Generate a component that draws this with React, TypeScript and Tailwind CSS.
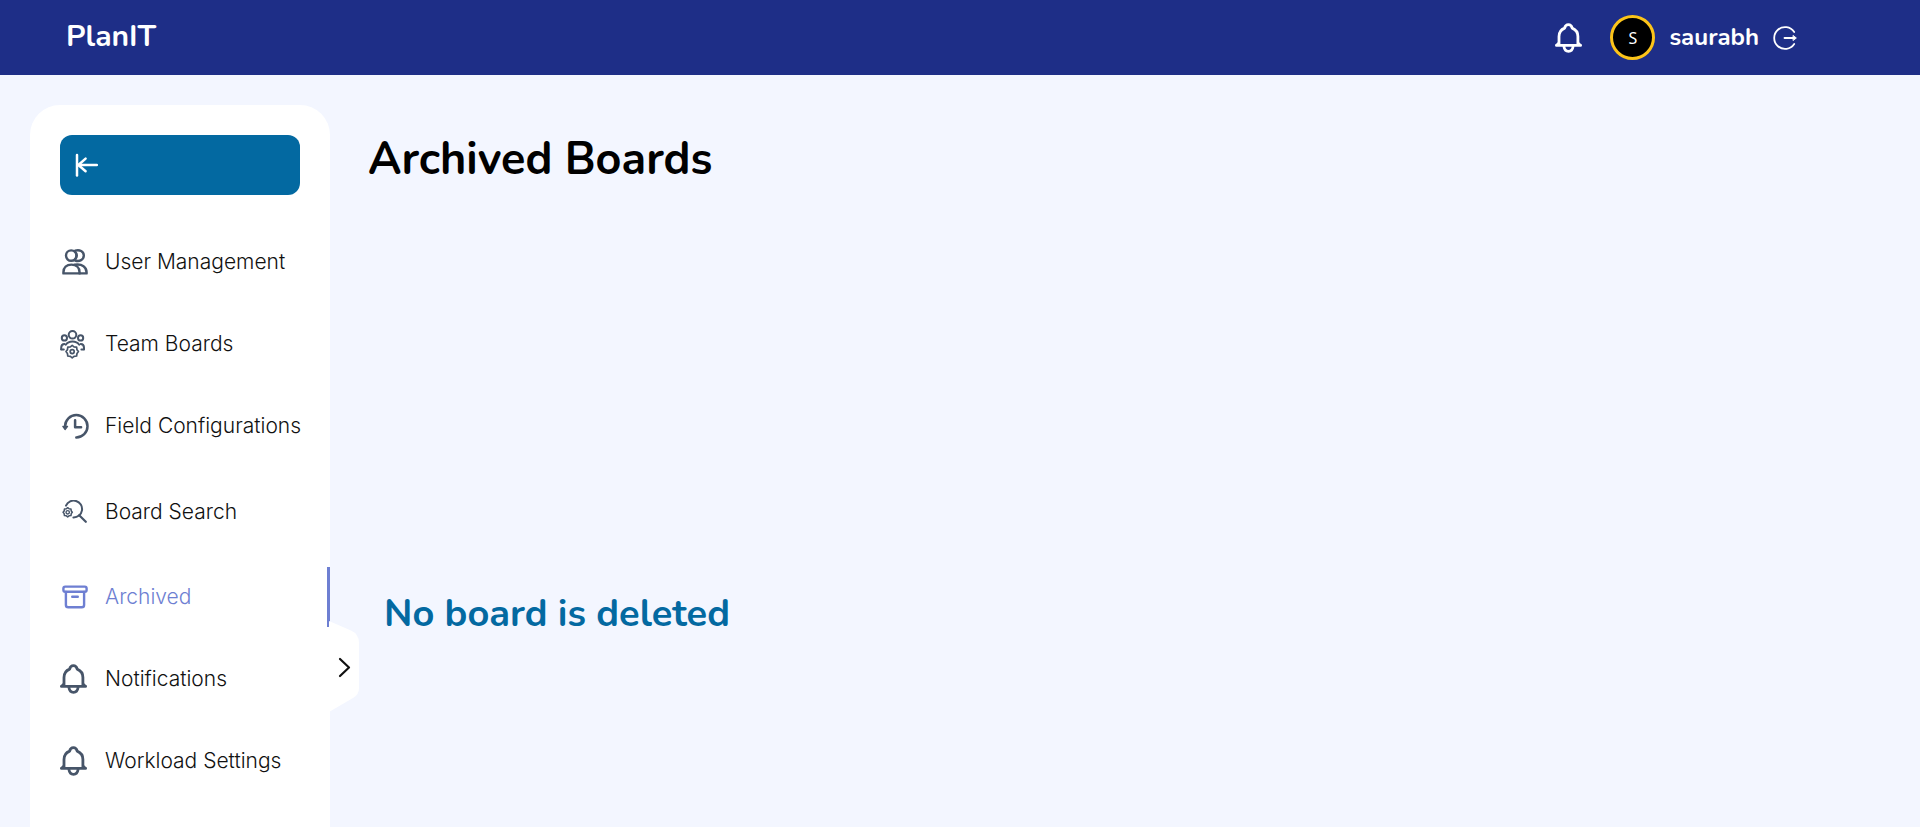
import { useState, type ReactNode } from "react";

const stroke = {
  fill: "none",
  stroke: "currentColor",
  strokeLinecap: "round" as const,
  strokeLinejoin: "round" as const,
};

function BellIcon() {
  return (
    <svg width="27" height="30" viewBox="0 0 27 30" aria-hidden="true" {...stroke} strokeWidth="2.8">
      <path d="M1.4 22.4h24.2" />
      <path d="M4 21.5V13.4C4 9.6 6 6.6 9.6 5.1C10.2 2.6 11.6 1.6 13.4 1.6S16.6 2.6 17.2 5.1C20.8 6.6 22.9 9.6 22.9 13.4v8.1" />
      <path d="M1.6 21.6L3.9 19.4M25.4 21.6L23 19.4" strokeWidth="1.8" />
      <path d="M8.9 23.4c.5 3.4 2.2 5 4.6 5s4.1-1.6 4.6-5" />
    </svg>
  );
}

function UsersIcon() {
  return (
    <svg width="26" height="26" viewBox="0 0 26 26" aria-hidden="true" {...stroke} strokeWidth="2.4">
      <circle cx="9.2" cy="6.6" r="5.2" />
      <path d="M13.2 1.7C17.5.2 21.8 2.5 21.8 6.6S17.5 13 13.2 11.5" />
      <path d="M12.6 2.4c2.9 2.4 2.9 6 0 8.4" />
      <path d="M1.4 24.4v-1C1.4 18.5 4.7 15.6 9.4 15.6s8.2 2.9 8.2 7.8v1z" />
      <path d="M12.6 15.8c7.8-1.2 12 2.3 12 7.6v1h-7" />
    </svg>
  );
}

const gearPath =
  "M0-6.2L1.8-4.8L4.4-4.4L4.8-1.8L6.2 0L4.8 1.8L4.4 4.4L1.8 4.8L0 6.2L-1.8 4.8L-4.4 4.4L-4.8 1.8L-6.2 0L-4.8-1.8L-4.4-4.4L-1.8-4.8Z";

function TeamIcon() {
  return (
    <svg width="26" height="29" viewBox="0 0 26 29" aria-hidden="true" {...stroke} strokeWidth="2">
      <circle cx="12.5" cy="4.8" r="3.8" />
      <circle cx="4.4" cy="7.9" r="2.6" />
      <circle cx="20.6" cy="7.9" r="2.6" />
      <path d="M1.2 19.2v-1.5c0-2.2 1.2-3.5 3.3-3.6M24 19.2v-1.5c0-2.2-1.2-3.5-3.3-3.6" />
      <path d="M1.2 19.4h2.6M21.4 19.4h2.6" />
      <path d="M5.8 14.8c1.6-2.3 3.8-3.2 6.7-3.2s5.1.9 6.7 3.2" />
      <g transform="translate(12.2 21.6)">
        <path d={gearPath} strokeWidth="1.7" />
        <circle r="2" strokeWidth="1.7" />
      </g>
    </svg>
  );
}

function HistoryIcon() {
  return (
    <svg width="27" height="26" viewBox="0 0 27 26" aria-hidden="true" {...stroke} strokeWidth="2.5">
      <path d="M3.1 13.3a11.2 11.2 0 1 1 11.2 11.2" />
      <path d="M.8 13.4h4.8L3.1 16.6z" fill="currentColor" strokeWidth="1.2" />
      <path d="M13.1 7.3v7h6" />
    </svg>
  );
}

function SearchGearIcon() {
  return (
    <svg width="25" height="23" viewBox="0 0 25 23" aria-hidden="true" {...stroke} strokeWidth="2">
      <path d="M4 5.6A8.4 8.4 0 1 1 11.4 17.4" />
      <path d="M17.2 15.2l6.6 6.6" strokeWidth="2.2" />
      <g transform="translate(5.7 12.3)">
        <path d={gearPath} strokeWidth="2.1" transform="scale(.74)" />
        <circle r="1.7" strokeWidth="1.4" />
      </g>
    </svg>
  );
}

function ArchiveIcon() {
  return (
    <svg width="26" height="24" viewBox="0 0 26 24" aria-hidden="true" {...stroke} strokeWidth="2.4">
      <rect x="1.4" y="1.6" width="23.2" height="5.2" rx="1.8" />
      <path d="M3.9 7v13c0 1.4.9 2.3 2.3 2.3h13.6c1.4 0 2.3-.9 2.3-2.3V7" />
      <path d="M10.2 11.8h5.6" />
    </svg>
  );
}

function CollapseIcon() {
  return (
    <svg width="24" height="24" viewBox="0 0 24 24" aria-hidden="true" {...stroke} strokeWidth="2.5">
      <path d="M3 2v20.6" />
      <path d="M22.8 12H4.4" />
      <path d="M11.6 5.6L4.4 12l7.2 6.2" />
    </svg>
  );
}

function LogoutIcon() {
  return (
    <svg width="24" height="24" viewBox="0 0 24 24" aria-hidden="true" {...stroke} strokeWidth="1.8">
      <path d="M21.2 6A10.9 10.9 0 1 0 21.2 18" />
      <path d="M11.5 12h10" />
      <path d="M20.3 9.6L23.4 12l-3.1 2.4z" fill="currentColor" strokeWidth=".8" />
    </svg>
  );
}

type Item = { label: string; icon: ReactNode; tall?: boolean; wideIcon?: boolean };

const items: Item[] = [
  { label: "User Management", icon: <UsersIcon /> },
  { label: "Team Boards", icon: <TeamIcon />, wideIcon: true },
  { label: "Field Configurations", icon: <HistoryIcon /> },
  { label: "Board Search", icon: <SearchGearIcon />, tall: true },
  { label: "Archived", icon: <ArchiveIcon /> },
  { label: "Notifications", icon: <BellIcon />, wideIcon: true },
  { label: "Workload Settings", icon: <BellIcon />, wideIcon: true },
];

function Header() {
  return (
    <header className="flex h-[75px] items-center justify-between bg-[#1e2e87] pr-[123px] pl-[66px] font-['Nunito','Lato',sans-serif] text-white">
      <a href="#home" className="pb-0.5 text-[30px] leading-9 font-bold">
        PlanIT
      </a>
      <div className="flex items-center">
        <button type="button" aria-label="Notifications" className="mr-7">
          <BellIcon />
        </button>
        <span className="mr-3.5 flex size-[45px] items-center justify-center rounded-full border-3 border-[#fcc419] bg-black font-['Noto_Sans',sans-serif] text-base">
          S
        </span>
        <span className="mr-3.5 pb-0.5 text-2xl font-bold">saurabh</span>
        <button type="button" aria-label="Log out">
          <LogoutIcon />
        </button>
      </div>
    </header>
  );
}

function Sidebar({ active, onSelect }: { active: string; onSelect: (label: string) => void }) {
  return (
    <aside className="relative w-[300px] shrink-0 rounded-t-[30px] bg-white pt-[30px]">
      <button
        type="button"
        aria-label="Collapse menu"
        className="mx-[30px] flex h-[60px] w-[240px] items-center rounded-xl bg-[#0369a1] px-3.5 text-white"
      >
        <CollapseIcon />
      </button>
      <nav className="mt-[37px] flex flex-col gap-[22px] font-['Inter',sans-serif] text-[21px] font-[350]">
        {items.map(({ label, icon, tall, wideIcon }) => (
          <a
            key={label}
            href={"#" + label.toLowerCase().replace(" ", "-")}
            aria-current={label === active ? "page" : undefined}
            onClick={() => onSelect(label)}
            className={
              "flex items-center border-r-3 pl-[30px] whitespace-nowrap " +
              (tall ? "h-[67px] " : "h-[60px] ") +
              (label === active ? "border-[#6e7fd2] text-[#6e7fd2]" : "border-transparent text-[#111]")
            }
          >
            <span
              className={
                "flex w-[45px] " + (wideIcon ? "pl-0 " : "pl-0.5 ") + (label === active ? "" : "text-[#475569]")
              }
            >
              {icon}
            </span>
            {label}
          </a>
        ))}
      </nav>
      <button type="button" aria-label="Expand menu" className="absolute top-[516px] left-[299px] h-[92px] w-[30px]">
        <svg width="30" height="92" viewBox="0 0 30 92" aria-hidden="true">
          <path d="M0 0L22 9.5Q30 13 30 22V67Q30 74 24 77L0 91Z" fill="#fff" />
          <path
            d="M11 38l9 8.5-9 8.5"
            fill="none"
            stroke="#111"
            strokeWidth="2.2"
            strokeLinecap="round"
            strokeLinejoin="round"
          />
        </svg>
      </button>
    </aside>
  );
}

export default function App() {
  const [active, setActive] = useState("Archived");
  return (
    <div className="flex min-h-screen flex-col bg-[#f3f6ff]">
      <Header />
      <div className="flex grow pt-[30px] pl-[30px]">
        <Sidebar active={active} onSelect={setActive} />
        <main className="flex grow flex-col pt-7 pl-[38px] font-['Nunito','Lato',sans-serif]">
          <h1 className="text-[45px] leading-[54px] font-bold text-black">Archived Boards</h1>
          <p className="mt-[402px] pl-4 text-[38px] leading-[50px] font-bold text-[#0369a1]">No board is deleted</p>
        </main>
      </div>
    </div>
  );
}
